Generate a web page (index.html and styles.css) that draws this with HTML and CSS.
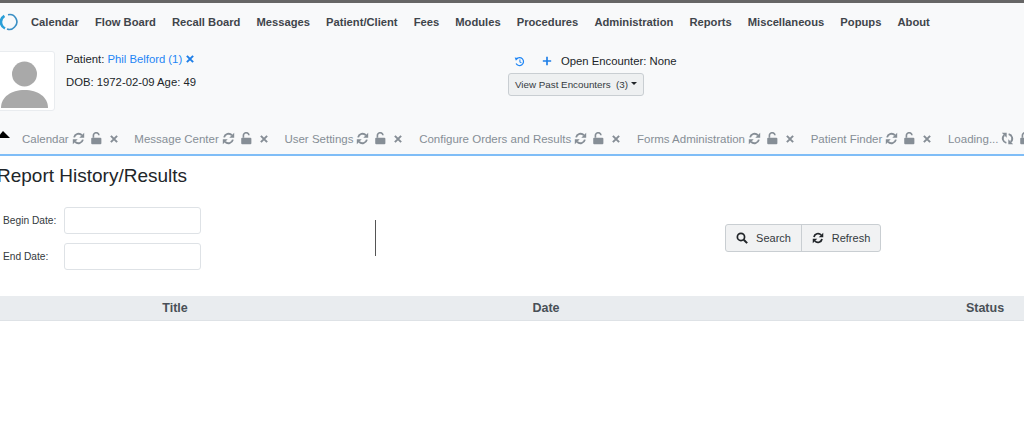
FILE: index.html
```html
<!DOCTYPE html>
<html lang="en">
<head>
<meta charset="utf-8">
<title>Report History/Results</title>
<link rel="stylesheet" href="styles.css">
</head>
<body>
<svg class="defs" width="0" height="0" aria-hidden="true">
  <symbol id="i-refresh" viewBox="0 0 16 16">
    <path d="M2.6 6.6A5.6 5.6 0 0 1 12.2 4" fill="none" stroke="currentColor" stroke-width="2.3"/>
    <path d="M15 1v6H9z" fill="currentColor"/>
    <path d="M13.4 9.4A5.6 5.6 0 0 1 3.8 12" fill="none" stroke="currentColor" stroke-width="2.3"/>
    <path d="M1 15V9h6z" fill="currentColor"/>
  </symbol>
  <symbol id="i-lock" viewBox="0 0 16 16">
    <path d="M4.2 7V4.6a3.4 3.4 0 0 1 6.8-.6" fill="none" stroke="currentColor" stroke-width="2"/>
    <rect x="1.5" y="7" width="12.5" height="8" rx="1.2" fill="currentColor"/>
  </symbol>
  <symbol id="i-x" viewBox="0 0 16 16">
    <path d="M3 3l10 10M13 3L3 13" fill="none" stroke="currentColor" stroke-width="3.2"/>
  </symbol>
</svg>

<header class="header">
  <nav class="nav">
    <svg class="logo" viewBox="0 0 18 18" aria-hidden="true">
      <path d="M4.4 2.8A7.2 7.2 0 0 0 5 15.4" fill="none" stroke="#2a9fd8" stroke-width="2.6"/>
      <path d="M8 1.8A7.2 7.2 0 0 1 14.6 14 7 7 0 0 1 7 16" fill="none" stroke="#3a8fc4" stroke-width="1.6"/>
    </svg>
    <a>Calendar</a><a>Flow Board</a><a>Recall Board</a><a>Messages</a><a>Patient/Client</a><a>Fees</a><a>Modules</a><a>Procedures</a><a>Administration</a><a>Reports</a><a>Miscellaneous</a><a>Popups</a><a>About</a>
  </nav>

  <section class="patient">
    <div class="avatar">
      <svg viewBox="0 0 58 58" width="58" height="58" aria-hidden="true">
        <circle cx="26.5" cy="22" r="12.5" fill="#a9a9a9"/>
        <path d="M3 56c0-11 10-18 23.500-18s23.500 7 23.500 18z" fill="#a9a9a9"/>
      </svg>
    </div>
    <div class="pt-info">
      <p>Patient: <a class="link">Phil Belford (1)</a> <svg class="ico-x-blue"><use href="#i-x"/></svg></p>
      <p>DOB: 1972-02-09 Age: 49</p>
    </div>
    <div class="encounter">
      <div class="enc-row">
        <svg class="ico-history" viewBox="0 0 16 16" aria-hidden="true">
          <path d="M3.6 4.4A5.8 5.8 0 1 1 3 11" fill="none" stroke="currentColor" stroke-width="1.8"/>
          <path d="M1 2l5.4 1-3.6 4z" fill="currentColor"/>
          <path d="M8.6 5v3.6l2.2 1.4" fill="none" stroke="currentColor" stroke-width="1.5"/>
        </svg>
        <svg class="ico-plus" viewBox="0 0 12 12" aria-hidden="true"><path d="M6 1v10M1 6h10" stroke="currentColor" stroke-width="2"/></svg>
        <span>Open Encounter: None</span>
      </div>
      <button class="past-btn">View Past Encounters&nbsp; (3)<i class="caret"></i></button>
    </div>
  </section>

  <div class="tabs">
    <i class="tab-arrow"></i>
    <div class="tab"><span>Calendar</span><svg class="ti"><use href="#i-refresh"/></svg><svg class="ti"><use href="#i-lock"/></svg><svg class="ti tx"><use href="#i-x"/></svg></div>
    <div class="tab"><span>Message Center</span><svg class="ti"><use href="#i-refresh"/></svg><svg class="ti"><use href="#i-lock"/></svg><svg class="ti tx"><use href="#i-x"/></svg></div>
    <div class="tab"><span>User Settings</span><svg class="ti"><use href="#i-refresh"/></svg><svg class="ti"><use href="#i-lock"/></svg><svg class="ti tx"><use href="#i-x"/></svg></div>
    <div class="tab"><span>Configure Orders and Results</span><svg class="ti"><use href="#i-refresh"/></svg><svg class="ti"><use href="#i-lock"/></svg><svg class="ti tx"><use href="#i-x"/></svg></div>
    <div class="tab"><span>Forms Administration</span><svg class="ti"><use href="#i-refresh"/></svg><svg class="ti"><use href="#i-lock"/></svg><svg class="ti tx"><use href="#i-x"/></svg></div>
    <div class="tab"><span>Patient Finder</span><svg class="ti"><use href="#i-refresh"/></svg><svg class="ti"><use href="#i-lock"/></svg><svg class="ti tx"><use href="#i-x"/></svg></div>
    <div class="tab"><span>Loading...</span><svg class="ti spin"><use href="#i-refresh"/></svg><svg class="ti"><use href="#i-lock"/></svg></div>
  </div>
</header>

<main class="main">
  <h1 class="title">Report History/Results</h1>
  <form class="filters">
    <div class="dates">
      <label class="field"><span>Begin Date:</span><input type="text"></label>
      <label class="field"><span>End Date:</span><input type="text"></label>
    </div>
    <div class="divider"></div>
    <div class="btn-group">
      <button type="button" class="btn">
        <svg class="btn-ico" viewBox="0 0 14 14" aria-hidden="true"><circle cx="5.8" cy="5.8" r="4.2" fill="none" stroke="currentColor" stroke-width="2"/><path d="M9 9l4 4" stroke="currentColor" stroke-width="2.4"/></svg>Search
      </button>
      <button type="button" class="btn">
        <svg class="btn-ico"><use href="#i-refresh"/></svg>Refresh
      </button>
    </div>
  </form>
  <div class="thead"><div>Title</div><div>Date</div><div>Status</div></div>
</main>
</body>
</html>
```

FILE: styles.css
```css
* { box-sizing: border-box; }
html, body { margin: 0; height: 422px; overflow: hidden; background: #fff; }
body { font-family: "Liberation Sans", Arial, sans-serif; color: #212529; width: 1024px; }
.defs { position: absolute; }
p { margin: 0; }

.header { background: #f8f9fa; border-top: 3px solid #666; border-bottom: 2px solid #7fbdf7; height: 156px; overflow: hidden; }

.nav { display: flex; align-items: center; height: 38px; gap: 16.1px; font-size: 11.2px; font-weight: 700; color: #3f454b; }
.logo { width: 18px; height: 18px; margin-right: -3.1px; flex: none; }
.nav a { white-space: nowrap; }

.patient { display: grid; grid-template-columns: 54px 443px auto; height: 84px; align-items: start; padding-top: 10px; font-size: 11.3px; }
.avatar { margin-left: -3px; width: 58px; height: 60px; background: #fff; border: 1px solid #e9ecef; border-radius: 3px; overflow: hidden; }
.avatar svg { display: block; }
.pt-info { padding: 1px 0 0 12px; display: flex; flex-direction: column; gap: 9px; line-height: 14px; color: #212529; }
.link { color: #1f86f5; }
.ico-x-blue { width: 10px; height: 10px; color: #1f7fe8; vertical-align: -1px; }
.encounter { display: flex; flex-direction: column; align-items: flex-start; margin-left: 11px; padding-top: 2px; }
.enc-row { display: flex; align-items: center; height: 15px; margin-bottom: 5px; color: #212529; }
.ico-history { width: 11px; height: 11px; color: #1f86f5; margin: 1px 0 0 6px; }
.ico-plus { width: 10px; height: 10px; color: #1f7fe8; margin: 1px 0 0 17px; }
.enc-row span { margin-left: 9px; }
.past-btn { font: 9.8px "Liberation Sans", Arial, sans-serif; color: #343a40; background: #eef0f1; border: 1px solid #c9ced2; border-radius: 3px; height: 23px; padding: 0 6px; display: flex; align-items: center; white-space: nowrap; }
.caret { width: 0; height: 0; margin-left: 3px; margin-top: -2px; border: 3px solid transparent; border-top: 3px solid #212529; border-bottom: 0; }

.tabs { display: flex; align-items: center; height: 29px; padding: 0 0 2px 22px; font-size: 11.5px; color: #868e96; white-space: nowrap; position: relative; gap: 15.7px; }
.tab-arrow { position: absolute; left: -3px; top: 6px; width: 0; height: 0; border-left: 6px solid transparent; border-right: 7px solid transparent; border-bottom: 7px solid #000; }
.tab { display: flex; align-items: center; flex: none; }
.ti { width: 13px; height: 13px; margin-left: 3px; flex: none; }
.ti + .ti { margin-left: 5px; }
.ti + .tx { width: 10px; height: 10px; margin-left: 6px; }
.spin { transform: rotate(90deg); }

.main { display: flow-root; }
.title { font-size: 19px; font-weight: 400; margin: 8px 0 0 -3px; line-height: 24px; color: #212529; }
.filters { display: grid; grid-template-columns: 375px 350px auto; height: 89px; margin-top: 19px; font-size: 10.2px; color: #343a40; }
.dates { display: flex; flex-direction: column; gap: 9px; }
.field { display: flex; align-items: center; padding-left: 3px; }
.field span { width: 61px; flex: none; padding-bottom: 1px; }
.field input { width: 137px; height: 27px; border: 1px solid #dee2e6; border-radius: 3px; background: #fff; }
.divider { width: 1px; height: 36px; margin-top: 13px; background: #555; }
.btn-group { display: flex; align-self: start; margin-top: 17px; width: 156px; height: 28px; border: 1px solid #c9ced2; border-radius: 3px; background: #f1f2f3; }
.btn { flex: none; display: flex; align-items: center; justify-content: center; gap: 8px; font: 11px "Liberation Sans", Arial, sans-serif; color: #343a40; background: none; border: 0; padding: 0; width: 75px; }
.btn + .btn { width: 79px; border-left: 1px solid #c9ced2; }
.btn-ico { width: 12px; height: 12px; color: #212529; }

.thead { display: grid; grid-template-columns: 350px 392px 486px; height: 25px; background: #e9ecef; border-bottom: 1px solid #dee2e6; font-size: 12.5px; font-weight: 700; color: #495057; line-height: 24px; text-align: center; }
```
